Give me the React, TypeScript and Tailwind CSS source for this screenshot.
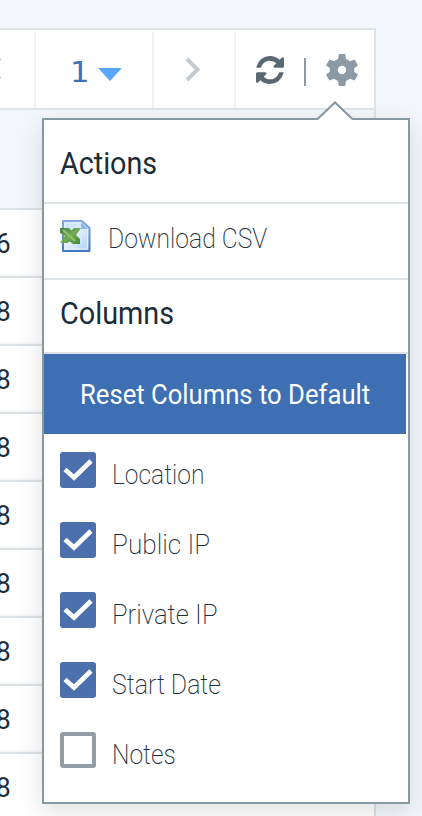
import React from "react";

const rows = ["6", "8", "8", "8", "8", "8", "8", "8", "8"];

const options = [
  { label: "Location", checked: true, fit: "scale-x-[0.88]" },
  { label: "Public IP", checked: true, fit: "scale-x-[0.935]" },
  { label: "Private IP", checked: true, fit: "scale-x-[0.92]" },
  { label: "Start Date", checked: true, fit: "scale-x-[0.89]" },
  { label: "Notes", checked: false, fit: "scale-x-[0.88]" },
];

function Chevron({ flip = false }: { flip?: boolean }) {
  return (
    <svg width="16" height="26" viewBox="0 0 16 26" className={flip ? "rotate-180" : ""}>
      <path d="M2 2 L12.500 12.500 L2 23" fill="none" stroke="#c3cbd1" strokeWidth="4" />
    </svg>
  );
}

function RefreshIcon() {
  return (
    <svg width="28" height="28" viewBox="0 0 1536 1536" fill="#5a6872">
      <path d="M1511 928q0 5-1 7-64 268-268 434.500T764 1536q-146 0-282.500-55T238 1324l-129 129q-19 19-45 19t-45-19-19-45V960q0-26 19-45t45-19h448q26 0 45 19t19 45-19 45l-137 137q71 66 161 102t187 36q134 0 250-65t186-179q11-17 53-117 8-23 30-23h192q13 0 22.500 9.500t9.500 22.500zm25-800v448q0 26-19 45t-45 19h-448q-26 0-45-19t-19-45 19-45l138-138Q969 256 768 256q-134 0-250 65T332 500q-11 17-53 117-8 23-30 23H50q-13 0-22.500-9.500T18 608v-7q65-268 270-434.500T768 0q146 0 284 55.500T1297 212l130-129q19-19 45-19t45 19 19 45z" />
    </svg>
  );
}

function GearIcon() {
  return (
    <svg width="32" height="32" viewBox="0 0 32 32">
      <path
        fill="#8b9aa5"
        fillRule="evenodd"
        d="M12.800 0H19.200L20 5Q22 5.700 24 7.200L28.500 5.400L32 11.200L28.200 14.200V17.800L32 20.800L28.500 26.600L24 24.800Q22 26.300 20 27L19.200 32H12.800L12 27Q10 26.300 8 24.800L3.500 26.600L0 20.800L3.800 17.800V14.200L0 11.200L3.500 5.400L8 7.200Q10 5.700 12 5ZM16 11.800A4.200 4.200 0 1 0 16 20.200A4.200 4.200 0 1 0 16 11.800Z"
      />
    </svg>
  );
}

function SheetIcon() {
  return (
    <svg width="32" height="32" viewBox="0 0 32 32">
      <defs>
        <linearGradient id="page" x1="0" y1="0" x2="1" y2="1">
          <stop offset="0" stopColor="#c4dbf7" />
          <stop offset="0.500" stopColor="#e0eefd" />
          <stop offset="1" stopColor="#a9caf3" />
        </linearGradient>
        <linearGradient id="edge" x1="0" y1="0" x2="0" y2="1">
          <stop offset="0" stopColor="#83aadb" />
          <stop offset="1" stopColor="#4477c4" />
        </linearGradient>
        <linearGradient id="leaf" x1="0" y1="0" x2="1" y2="1">
          <stop offset="0" stopColor="#3d8240" />
          <stop offset="0.500" stopColor="#74ab55" />
          <stop offset="1" stopColor="#3d8531" />
        </linearGradient>
      </defs>
      <path d="M3 1H22L29.500 8V31H3Z" fill="url(#page)" stroke="url(#edge)" strokeWidth="2" strokeLinejoin="round" />
      <path d="M5 3H21L27.500 9V29H5Z" fill="none" stroke="#eaf4ff" strokeWidth="1.200" />
      <path d="M21 2V9H28Z" fill="#8fb8ea" />
      <path d="M0 8H9L11.500 10.500L14 8H21L16 15L20 19V24H13L10 21.500L7 23H0L5 16L0 13Z" fill="url(#leaf)" />
      <path d="M3 10L15 21" stroke="#93c173" strokeWidth="2" />
    </svg>
  );
}

function Checkbox({ checked }: { checked: boolean }) {
  return checked ? (
    <span className="block h-9 w-9 rounded-[3px] bg-[#4c6fad]">
      <svg width="36" height="36" viewBox="0 0 36 36">
        <path d="M5 17.500L14 25.500L31 9" fill="none" stroke="#ffffff" strokeWidth="4.600" />
      </svg>
    </span>
  ) : (
    <span className="block h-9 w-9 rounded-[3px] border-4 border-[#929da6] bg-white" />
  );
}

export default function App() {
  return (
    <div className="relative h-[816px] w-[422px] overflow-hidden bg-[#f3f7fc] pt-7 font-['Roboto','Liberation_Sans',sans-serif] text-[#1b2d37]">
      <div className="flex h-[82px] w-[376px] border-y-2 border-r-2 border-[#dde5eb] bg-white pt-0.5">
        <div className="flex w-9 items-center border-r-2 border-[#eff1f3]">
          <span className="-ml-[14px] -mt-1"><Chevron flip /></span>
        </div>
        <div className="flex w-[118px] items-center border-r-2 border-[#eff1f3] pl-[34px]">
          <span className="mt-1.5 w-[18px] origin-left scale-x-110 font-['DejaVu_Sans',sans-serif] text-[28px] text-[#3d6fb2]">1</span>
          <svg width="26" height="15" viewBox="0 0 26 15" className="ml-[9px] mt-2 shrink-0">
            <path d="M1 1H25L13 14Z" fill="#57a8fb" />
          </svg>
        </div>
        <div className="flex w-[82px] items-center border-r-2 border-[#eff1f3] pl-[31px]">
          <Chevron />
        </div>
        <div className="flex items-center pl-5">
          <RefreshIcon />
          <span className="ml-[20px] mt-[3px] h-7 w-0.5 bg-[#8b9aa5]" />
          <span className="ml-5"><GearIcon /></span>
        </div>
      </div>

      <div className="w-[376px] border-r-2 border-[#dde2e6]">
        <div className="h-[98px]" />
        {rows.map((value, i) => (
          <div key={i} className="flex h-[68px] items-center border-b-2 border-t-2 border-b-[#f6f8f9] border-t-[#dde2e6] bg-white pt-1 text-[28px] font-[450]">
            <span className="-ml-[5px] origin-right scale-x-95">{value}</span>
          </div>
        ))}
      </div>

      <div className="absolute left-[42px] top-[118px] h-[686px] w-[368px] border-2 border-[#8898a3] bg-white shadow-[0_8px_24px_rgba(0,0,0,0.12)]">
        <svg width="40" height="20" viewBox="0 0 40 20" className="absolute -top-[19px] left-[271px]">
          <path d="M2 19L20 2L38 19V20H2Z" fill="#ffffff" />
          <path d="M2 18.500L20 1.500L38 18.500" fill="none" stroke="#8898a3" strokeWidth="2" />
        </svg>
        <div className="flex h-[84px] items-center border-b-2 border-[#dde2e6] pl-4 pt-[3px] text-[32px] font-[450]">
          <span className="origin-left scale-x-[0.897]">Actions</span>
        </div>
        <div className="flex h-[76px] items-center border-b-2 border-[#dde2e6] pl-4">
          <span className="-mt-2.5"><SheetIcon /></span>
          <span className="ml-4 mt-[-4px] origin-left scale-x-[0.882] whitespace-nowrap text-[28px] font-extralight">Download CSV</span>
        </div>
        <div className="flex h-[74px] items-center border-b-2 border-[#dde2e6] pb-1.5 pl-4 text-[32px] font-[450]">
          <span className="origin-left scale-x-[0.9]">Columns</span>
        </div>
        <div className="flex h-20 w-[362px] items-center bg-[#3d6fb2] pl-9 pt-0.5 text-[28px] text-white">
          <span className="origin-left scale-x-[0.916] whitespace-nowrap">Reset Columns to Default</span>
        </div>
        <div className="flex flex-col gap-[34px] pl-4 pt-[18px]">
          {options.map((option) => (
            <label key={option.label} className="flex h-9 items-center">
              <Checkbox checked={option.checked} />
              <span className={`ml-4 mt-2.5 origin-left whitespace-nowrap text-[28px] font-extralight ${option.fit}`}>{option.label}</span>
            </label>
          ))}
        </div>
      </div>
    </div>
  );
}
